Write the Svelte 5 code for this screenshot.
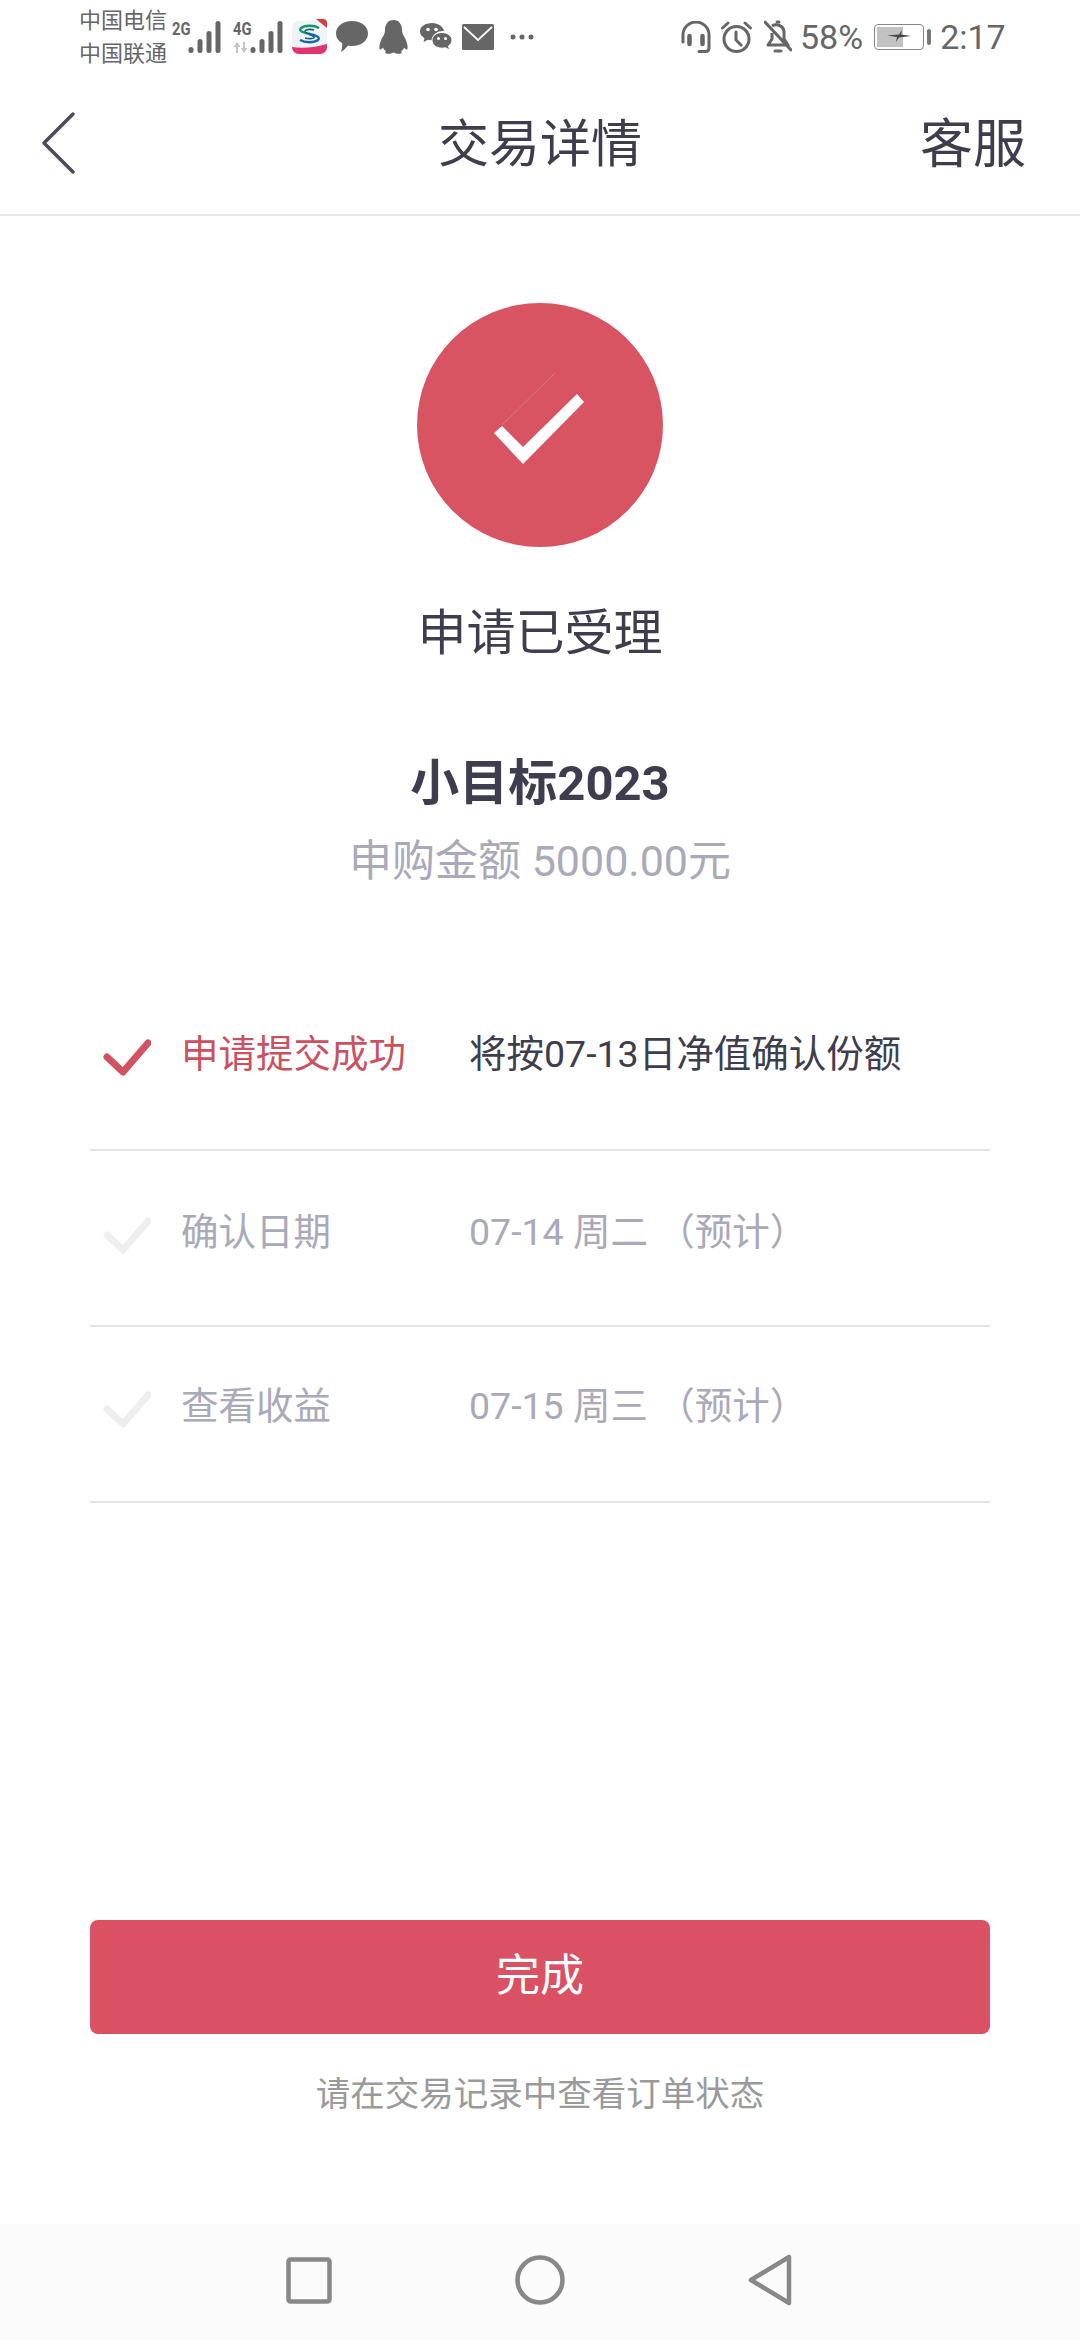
<script>
  // booking steps shown under the amount
  const steps = [
    { label: '申请提交成功', value: '将按07-13日净值确认份额', done: true },
    { label: '确认日期', value: '07-14 周二 （预计）', done: false },
    { label: '查看收益', value: '07-15 周三 （预计）', done: false }
  ];
  const barHeights = [6, 14, 22, 32];
</script>

{#snippet bars()}
  <svg class="bars" width="33" height="32" viewBox="0 0 33 32" fill="#666">
    {#each barHeights as h, i}
      <rect x={i * 9 + 0.5} y={32 - h} width="5" height={h} rx="2.5" />
    {/each}
  </svg>
{/snippet}

<div class="page">
  <div class="status">
    <div class="carriers"><span>中国电信</span><span>中国联通</span></div>
    <div class="net two"><b>2G</b>{@render bars()}</div>
    <div class="net four">
      <b>4G</b>
      <svg class="arrows" width="16" height="11" viewBox="0 0 16 11" fill="#c4c4c4"><path d="M4 0l3.5 5H5v6H3V5H.5zM11 11L7.8 6H10V0h2v6h2.500z" /></svg>
      {@render bars()}
    </div>
    <svg class="ic app" width="35" height="35" viewBox="0 0 35 35">
      <rect x="0" y="2" width="35" height="33" rx="7" fill="#eef3f7" />
      <path d="M0 28c10 1.500 24 .5 35-3v3a7 7 0 0 1-7 7H7a7 7 0 0 1-7-7z" fill="#e0336f" />
      <path d="M24 0l11 9V4a4 4 0 0 0-4-4z" fill="#d93c45" />
      <path d="M27 9c-5-3-14-3-18 0-3 3 3 5 9 6" fill="none" stroke="#12986a" stroke-width="2.400" />
      <path d="M8 21c5 3 14 3 18 0 3-3-3-5-9-6" fill="none" stroke="#1467a8" stroke-width="2.400" />
      <path d="M22 11c-3-1-8-1-9 1s8 4 9 6-6 2-9 1" fill="none" stroke="#12607f" stroke-width="1.600" />
    </svg>
    <svg class="ic chat" width="32" height="31" viewBox="0 0 32 31" fill="#666">
      <path d="M16 0c9 0 16 5 16 12.500S25 25 16 25c-2 0-3 0-4-.5C10 27 8 29 5 31c1-3 1.500-6 1-9C2 20 0 16.500 0 12.500 0 5 7 0 16 0z" />
    </svg>
    <svg class="ic qq" width="29" height="34" viewBox="0 0 29 34" fill="#666">
      <path d="M14.500 0c6 0 8.500 5 8.500 10 0 3 1 5 3 8 2 4 3 8 2.500 11-1 1-2.500 0-3.500-1.500-.5 2-1.500 3-3 3.500 1 1 1 2 0 2.500-2 .500-5 .500-7.500-1-2.500 1.500-5.500 1.500-7.500 1-1-.5-1-1.500 0-2.500-1.500-.5-2.500-1.500-3-3.500C3 29 1.500 30 .5 29 0 26 1 22 3 18c2-3 3-5 3-8C6 5 8.500 0 14.500 0z" />
    </svg>
    <svg class="ic wechat" width="32" height="28" viewBox="0 0 32 28">
      <path d="M12 0c6.500 0 11.500 4 12 8-6-.5-12 3-11.500 9-1.500.3-3 .2-4.500-.2L3.500 19l1-3.700C1.500 13.500 0 11 0 8.500 0 3.500 5.500 0 12 0z" fill="#666" />
      <path d="M22 9.500c5.500 0 10 3.500 10 7.500 0 2.500-1.500 4.500-3.500 6l1 4-4-2.300c-1 .3-2.300.5-3.500.5-5.500 0-10-3.500-10-8s4.500-7.700 10-7.700z" fill="#666" stroke="#fff" stroke-width="1" />
      <g fill="#fff"><circle cx="8" cy="6.500" r="1.800" /><circle cx="16" cy="6.500" r="1.800" /><circle cx="18.500" cy="15.500" r="1.500" /><circle cx="25.500" cy="15.500" r="1.500" /></g>
    </svg>
    <svg class="ic mail" width="32" height="26" viewBox="0 0 32 26">
      <rect width="32" height="26" rx="1.500" fill="#666" />
      <path d="M2 3l14 13L30 3" fill="none" stroke="#fff" stroke-width="1.800" />
    </svg>
    <svg class="ic dots" width="24" height="6" viewBox="0 0 24 6" fill="#666">
      <circle cx="3" cy="3" r="2.500" /><circle cx="12" cy="3" r="2.500" /><circle cx="21" cy="3" r="2.500" />
    </svg>

    <svg class="ic head" width="30" height="32" viewBox="0 0 30 32" fill="none" stroke="#666" stroke-width="3">
      <path d="M2 21V14a13 13 0 0 1 26 0v13c0 2.500-1.500 3.500-3.500 3.500H18" stroke-linecap="round" />
      <path d="M8.500 15v8M21.500 15v8" stroke-width="4.500" stroke-linecap="round" />
    </svg>
    <svg class="ic alarm" width="31" height="32" viewBox="0 0 31 32" fill="none" stroke="#666" stroke-width="3">
      <circle cx="15.500" cy="18" r="12.500" />
      <path d="M15 11v8l5 5M1.500 7L7 2M29.500 7L24 2" stroke-linecap="round" />
    </svg>
    <svg class="ic bell" width="28" height="34" viewBox="0 0 28 34" fill="none" stroke="#666" stroke-width="3">
      <path d="M8 6a8 8 0 0 1 12 5v8l4 6H4l4-6v-6" stroke-linejoin="round" />
      <path d="M1 2l26 28M11 31h6M13 2h2" stroke-linecap="round" />
    </svg>
    <span class="pct">58%</span>
    <div class="battery">
      <div class="level"></div>
      <svg class="bolt" width="24" height="12" viewBox="0 0 24 12" fill="#444"><path d="M0 5.500l12-1L15 0l-1 4.500 10 1.500-12 1.500L9 12l1-5z" /></svg>
    </div>
    <div class="tip"></div>
    <span class="time">2:17</span>
  </div>

  <header class="nav">
    <svg class="back" width="40" height="64" viewBox="0 0 40 64" fill="none" stroke="#4a4957" stroke-width="3.500" stroke-linecap="round" stroke-linejoin="round">
      <path d="M33 3L4 32l29 29" />
    </svg>
    <h1>交易详情</h1>
    <span class="service">客服</span>
  </header>

  <main>
    <div class="result">
      <svg width="120" height="120" viewBox="0 0 120 120">
        <path d="M22 60L75 8" stroke="#e88490" stroke-width="0.700" fill="none" />
        <path d="M14 68l8-7 21 21 54-53 7 8-61 62z" fill="#fff" />
      </svg>
    </div>
    <div class="accepted">申请已受理</div>
    <div class="fund">小目标2023</div>
    <div class="amount">申购金额 5000.00元</div>

    <ul class="steps">
      {#each steps as step}
        <li class:done={step.done}>
          <svg class="check" width="48" height="38" viewBox="0 0 48 38" fill="none" stroke-width="7" stroke-linecap="round" stroke-linejoin="round">
            <path d="M4 18l16 15L45 4" />
          </svg>
          <span class="label">{step.label}</span>
          <span class="value">{step.value}</span>
        </li>
      {/each}
    </ul>

    <button class="finish">完成</button>
    <p class="hint">请在交易记录中查看订单状态</p>
  </main>

  <footer class="softkeys">
    <svg width="46" height="47" viewBox="0 0 46 47" fill="none" stroke="#888" stroke-width="4.500"><rect x="2.500" y="2.500" width="41" height="42" rx="2" /></svg>
    <svg width="50" height="50" viewBox="0 0 50 50" fill="none" stroke="#888" stroke-width="4.500"><circle cx="25" cy="25" r="22.500" /></svg>
    <svg width="44" height="52" viewBox="0 0 44 52" fill="none" stroke="#888" stroke-width="4.500" stroke-linejoin="round"><path d="M41 3v46L3 26z" /></svg>
  </footer>
</div>

<style>
  :global(body) {
    margin: 0;
    background: #fff;
  }

  .page {
    width: 1080px;
    height: 2340px;
    display: flex;
    flex-direction: column;
    background: #fff;
    color: #3e3d4d;
    font-family: Roboto, "Noto Sans CJK SC", sans-serif;
    overflow: hidden;
  }

  .status {
    height: 72px;
    flex: none;
    display: flex;
    align-items: flex-start;
    padding-left: 79px;
    color: #666;
    box-sizing: border-box;
  }

  .carriers {
    width: 93px;
    display: flex;
    flex-direction: column;
    font-size: 22px;
    line-height: 33px;
    margin-top: 4px;
    white-space: nowrap;
  }

  .net {
    display: flex;
    position: relative;
    height: 32px;
    margin-top: 21px;
  }

  .net b {
    position: absolute;
    left: 0;
    top: 0;
    font-size: 18px;
    line-height: 15px;
    transform: scaleX(0.82);
    transform-origin: left top;
  }

  .net.two {
    width: 49px;
    justify-content: flex-end;
  }

  .net.four {
    width: 50px;
    margin-left: 12px;
    justify-content: flex-end;
  }

  .arrows {
    position: absolute;
    left: 0;
    bottom: 0;
  }

  .ic {
    flex: none;
  }

  .app { margin: 19px 0 0 9px; }
  .chat { margin: 21px 0 0 9px; }
  .qq { margin: 20px 0 0 11px; }
  .wechat { margin: 23px 0 0 12px; }
  .mail { margin: 24px 0 0 10px; }
  .dots { margin: 34px 0 0 16px; }
  .head { margin: 21px 0 0 147px; }
  .alarm { margin: 21px 0 0 10px; }
  .bell { margin: 20px 0 0 12px; }

  .pct,
  .time {
    font-size: 34px;
    line-height: 40px;
    margin-top: 17px;
    color: #666;
  }

  .pct { margin-left: 8px; }
  .time { margin-left: 9px; }

  .battery {
    position: relative;
    width: 50px;
    height: 26px;
    margin: 24px 0 0 11px;
    border: 1.500px solid #888;
    border-radius: 4px;
    box-sizing: border-box;
  }

  .level {
    width: 26px;
    height: 20px;
    margin: 1.500px;
    background: #c2c2c2;
  }

  .bolt {
    position: absolute;
    left: 12px;
    top: 5px;
  }

  .tip {
    width: 4px;
    height: 16px;
    margin: 29px 0 0 3px;
    background: #777;
    border-radius: 2px;
  }

  .nav {
    height: 144px;
    flex: none;
    display: grid;
    grid-template-columns: 1fr auto 1fr;
    align-items: center;
    padding: 4px 54px 0;
    border-bottom: 2px solid #e8e8e8;
    box-sizing: border-box;
  }

  .back {
    margin: -4px 0 0 -14px;
  }

  h1 {
    margin: 0;
    font-size: 51px;
    font-weight: 400;
    line-height: 60px;
  }

  .service {
    justify-self: end;
    font-size: 53px;
    line-height: 60px;
  }

  main {
    flex: 1;
    display: flex;
    flex-direction: column;
    align-items: center;
  }

  .result {
    width: 246px;
    height: 244px;
    margin-top: 87px;
    border-radius: 50%;
    background: #d95462;
    display: flex;
    align-items: center;
    justify-content: center;
  }

  .accepted {
    margin-top: 57px;
    font-size: 49px;
    line-height: 60px;
  }

  .fund {
    margin-top: 90px;
    font-size: 49px;
    font-weight: 700;
    line-height: 60px;
  }

  .amount {
    margin-top: 19px;
    font-size: 43px;
    line-height: 56px;
    color: #a9a9b9;
  }

  .steps {
    list-style: none;
    margin: 86px 0 0;
    padding: 0;
    width: 900px;
  }

  .steps li {
    height: 176px;
    box-sizing: border-box;
    display: flex;
    align-items: flex-start;
    padding-top: 56px;
    border-bottom: 2.500px solid #e4e4e9;
    color: #a9a9b9;
    font-size: 37.500px;
    line-height: 50px;
  }

  .steps li:first-child {
    padding-top: 54px;
  }

  .steps li:last-child {
    padding-top: 54px;
  }

  .check {
    margin: 10px 30px 0 13px;
    stroke: #eeeef0;
    flex: none;
  }

  .done .check {
    stroke: #d2525f;
  }

  .label {
    width: 288px;
    flex: none;
  }

  .done .label {
    color: #cb5161;
  }

  .done .value {
    color: #3e3d4d;
  }

  .finish {
    display: block;
    width: 900px;
    height: 114px;
    margin-top: 417px;
    padding: 0 0 11px;
    border: none;
    border-radius: 8px;
    background: #d95162;
    color: #fff;
    font: inherit;
    font-size: 44px;
  }

  .hint {
    margin: 37px 0 0;
    font-size: 34.500px;
    line-height: 46px;
    color: #9a9a9a;
  }

  .softkeys {
    height: 116px;
    flex: none;
    display: flex;
    align-items: center;
    background: #fbfbfb;
    padding-left: 286px;
    gap: 183px;
    padding-bottom: 4px;
    box-sizing: border-box;
  }
</style>
